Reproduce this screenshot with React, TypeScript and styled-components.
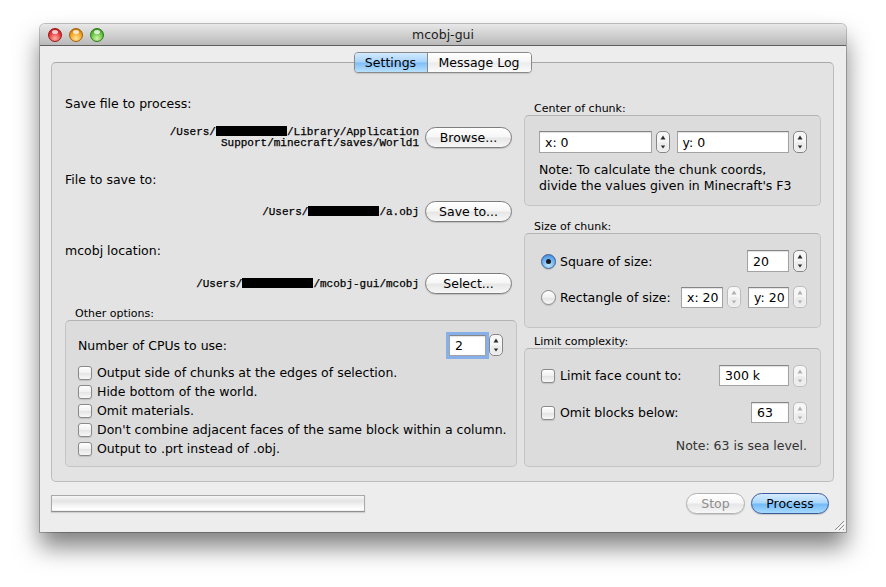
import React from 'react';
import styled, { createGlobalStyle } from 'styled-components';

//ページ全体
const GlobalStyle = createGlobalStyle`
  html, body {
    margin: 0;
    padding: 0;
    background: #ffffff;
  }
  body {
    font-family: "DejaVu Sans", "Liberation Sans", sans-serif;
    font-size: 12.5px;
    color: #000;
  }
`;

const Page = styled.div`
  width: 886px;
  height: 587px;
  box-sizing: border-box;
  padding: 24px 0 0 40px;
  overflow: hidden;
`;

//ウィンドウ
const Window = styled.div`
  position: relative;
  width: 806px;
  height: 508px;
  display: flex;
  flex-direction: column;
  background: #ededed;
  border-radius: 5px 5px 0 0;
  box-shadow: 0 0 0 1px rgba(0, 0, 0, 0.24), 0 15px 24px rgba(0, 0, 0, 0.5);
`;

const TitleBar = styled.div`
  height: 22px;
  box-sizing: border-box;
  display: flex;
  align-items: center;
  position: relative;
  padding-left: 8px;
  border-radius: 5px 5px 0 0;
  border-bottom: 1px solid #5e5e5e;
  background: linear-gradient(#e8e8e8, #d3d3d3 45%, #b9b9b9);
`;

const Lights = styled.div`
  display: flex;
  gap: 7px;
`;

const Light = styled.div<{ $color: string; $dark: string; $glow: string }>`
  position: relative;
  width: 14px;
  height: 14px;
  box-sizing: border-box;
  border-radius: 50%;
  border: 1px solid ${({ $dark }) => $dark};
  background: radial-gradient(circle at 50% 78%, ${({ $glow }) => $glow} 0%, ${({ $color }) => $color} 55%, ${({ $dark }) => $dark} 100%);
  &::after {
    content: '';
    position: absolute;
    left: 3px;
    top: 1px;
    width: 6px;
    height: 4px;
    border-radius: 50%;
    background: rgba(255, 255, 255, 0.75);
  }
`;

const Title = styled.div`
  position: absolute;
  left: 0;
  right: 0;
  text-align: center;
  font-size: 12.5px;
  color: #1c1c1c;
  pointer-events: none;
`;

const WindowBody = styled.div`
  flex: 1;
  display: flex;
  flex-direction: column;
  padding: 6px 12px 0 11px;
`;

//タブ
const TabStrip = styled.div`
  position: relative;
  z-index: 1;
  display: flex;
  justify-content: center;
  height: 21px;
  margin-bottom: -11px;
`;

const TabGroup = styled.div`
  display: flex;
  height: 21px;
  box-sizing: border-box;
  border: 1px solid #8a8a8a;
  border-radius: 4px;
  overflow: hidden;
  box-shadow: 0 1px 1px rgba(0, 0, 0, 0.12);
`;

const Tab = styled.div<{ $active?: boolean; $width: number }>`
  width: ${({ $width }) => $width}px;
  text-align: center;
  line-height: 19px;
  font-size: 12.5px;
  & + & {
    border-left: 1px solid #8a8a8a;
  }
  background: ${({ $active }) => $active
    ? 'linear-gradient(#d3eafe, #a6d3fb 48%, #7fbdf6 52%, #b9e1fd)'
    : 'linear-gradient(#ffffff, #f5f5f5 48%, #ebebeb 52%, #fbfbfb)'};
`;

const TabPanel = styled.div`
  height: 420px;
  box-sizing: border-box;
  border: 1px solid #bdbdbd;
  border-top-color: #a8a8a8;
  border-radius: 5px;
  background: #e3e3e3;
  display: grid;
  grid-template-columns: 452px 297px;
  column-gap: 7px;
  padding: 0 12px 14px 13px;
`;

const Column = styled.div<{ $top: number }>`
  display: flex;
  flex-direction: column;
  padding-top: ${({ $top }) => $top}px;
`;

const FieldLabel = styled.div<{ $gap: number }>`
  margin-top: ${({ $gap }) => $gap}px;
  line-height: 16px;
`;

const PathRow = styled.div<{ $gap: number }>`
  margin-top: ${({ $gap }) => $gap}px;
  display: flex;
  justify-content: flex-end;
  align-items: center;
  gap: 6px;
  padding-right: 5px;
`;

const PathText = styled.div`
  font-family: "Liberation Mono", "DejaVu Sans Mono", monospace;
  font-size: 11px;
  line-height: 11px;
  text-align: right;
  white-space: nowrap;
  color: #000;
  -webkit-text-stroke: 0.25px #000;
`;

const Redacted = styled.span`
  display: inline-block;
  width: 71px;
  height: 10px;
  background: #000;
  vertical-align: -1px;
`;

//ボタン
const AquaButton = styled.button<{ $width: number; $primary?: boolean }>`
  width: ${({ $width }) => $width}px;
  height: 21px;
  padding: 0;
  border-radius: 11px;
  font-family: "DejaVu Sans", "Liberation Sans", sans-serif;
  font-size: 12.5px;
  color: ${({ disabled }) => (disabled ? '#8e8e8e' : '#000')};
  border: 1px solid ${({ $primary, disabled }) => ($primary ? '#3d5a9c' : disabled ? '#b2b2b2' : '#7d7d7d')};
  background: ${({ $primary }) => $primary
    ? 'linear-gradient(#d6ecff, #a9d6fd 48%, #73b8f6 52%, #a6dbff)'
    : 'linear-gradient(#ffffff, #f6f6f6 48%, #e6e6e6 52%, #f7f7f7)'};
  box-shadow: 0 1px 1px rgba(0, 0, 0, 0.15);
  cursor: default;
`;

//グループボックス
const GroupTitle = styled.div<{ $gap: number }>`
  margin-top: ${({ $gap }) => $gap}px;
  padding-left: 10px;
  font-size: 11px;
  line-height: 13px;
`;

const GroupBox = styled.div<{ $pad: string; $grow?: boolean }>`
  box-sizing: border-box;
  border: 1px solid #c4c4c4;
  border-top-color: #b4b4b4;
  border-radius: 5px;
  background: #dcdcdc;
  padding: ${({ $pad }) => $pad};
  ${({ $grow }) => ($grow ? 'flex: 1;' : '')}
  display: flex;
  flex-direction: column;
`;

const Row = styled.div<{ $gap?: number; $height?: number }>`
  display: flex;
  align-items: center;
  height: ${({ $height }) => $height ?? 22}px;
  margin-top: ${({ $gap }) => $gap ?? 0}px;
  white-space: nowrap;
`;

const Spacer = styled.div<{ $fixed?: number }>`
  flex: ${({ $fixed }) => ($fixed ? `0 0 ${$fixed}px` : '1')};
`;

const TextField = styled.div<{ $width?: number; $height?: number; $focused?: boolean }>`
  ${({ $width }) => ($width ? `width: ${$width}px;` : 'flex: 1;')}
  height: ${({ $height }) => $height ?? 22}px;
  box-sizing: border-box;
  display: flex;
  align-items: center;
  padding: 0 5px;
  background: #fff;
  border: 1px solid #a3a3a3;
  border-top-color: #858585;
  box-shadow: inset 0 1px 1px rgba(0, 0, 0, 0.12)${({ $focused }) => ($focused ? ', 0 0 0 3px #88b0e8' : '')};
  white-space: nowrap;
`;

const StepperWrap = styled.div<{ $gap: number }>`
  margin-left: ${({ $gap }) => $gap}px;
  display: flex;
  align-items: center;
`;

const CheckBox = styled.div`
  width: 14px;
  height: 14px;
  box-sizing: border-box;
  border: 1px solid #8a8a8a;
  border-radius: 3px;
  background: linear-gradient(#ffffff, #f0f0f0 50%, #e4e4e4 51%, #f8f8f8);
  box-shadow: 0 1px 1px rgba(0, 0, 0, 0.12);
  margin-right: 5px;
  flex-shrink: 0;
`;

const Radio = styled.div<{ $on?: boolean }>`
  position: relative;
  width: 15px;
  height: 15px;
  box-sizing: border-box;
  border-radius: 50%;
  border: 1px solid ${({ $on }) => ($on ? '#3f5f95' : '#8a8a8a')};
  background: ${({ $on }) => $on
    ? 'radial-gradient(circle at 50% 80%, #bfe6ff 0%, #69b1f1 55%, #3a7fd0 100%)'
    : 'linear-gradient(#ffffff, #f0f0f0 50%, #e2e2e2 51%, #f8f8f8)'};
  box-shadow: 0 1px 1px rgba(0, 0, 0, 0.12);
  margin-right: 4px;
  flex-shrink: 0;
  &::after {
    content: '';
    display: ${({ $on }) => ($on ? 'block' : 'none')};
    position: absolute;
    left: 4px;
    top: 4px;
    width: 5px;
    height: 5px;
    border-radius: 50%;
    background: #1a1a1a;
  }
`;

const CheckList = styled.div`
  margin-top: 6px;
  display: flex;
  flex-direction: column;
`;

const CheckRow = styled.div`
  display: flex;
  align-items: center;
  height: 19px;
  white-space: nowrap;
`;

const Note = styled.div<{ $gap: number; $right?: boolean }>`
  margin-top: ${({ $gap }) => $gap}px;
  line-height: 16px;
  color: ${({ $right }) => ($right ? '#333' : '#000')};
  text-align: ${({ $right }) => ($right ? 'right' : 'left')};
  white-space: nowrap;
`;

//下部バー
const BottomBar = styled.div`
  display: flex;
  align-items: center;
  padding: 11px 5px 0 0;
`;

const ProgressBar = styled.div`
  width: 314px;
  height: 17px;
  box-sizing: border-box;
  border: 1px solid #a9a9a9;
  border-bottom-color: #8f8f8f;
  background: linear-gradient(#f6f6f6, #e4e4e4 35%, #f3f3f3 60%, #ffffff 90%, #e9e9e9);
  box-shadow: 0 1px 1px rgba(0, 0, 0, 0.12);
`;

const ButtonGroup = styled.div`
  margin-left: auto;
  display: flex;
  gap: 6px;
`;

const Grip = styled.svg`
  position: absolute;
  right: 1px;
  bottom: 1px;
`;

function Stepper(props: { disabled?: boolean }) {
  const stroke = props.disabled ? '#bcbcbc' : '#858585';
  const arrow = props.disabled ? '#b0b0b0' : '#2b2b2b';
  return (
    <svg width="14" height="22" viewBox="0 0 14 22">
      <rect x="0.5" y="0.5" width="13" height="21" rx="4.5" fill="#f6f6f6" stroke={stroke} />
      <rect x="1.5" y="11" width="11" height="9.5" rx="3.5" fill="#ececec" />
      <path d="M7 4.5 L9.5 8.5 H4.5 Z" fill={arrow} />
      <path d="M7 17.5 L9.2 14.5 H4.8 Z" fill={arrow} />
    </svg>
  );
}

const otherOptions = [
  'Output side of chunks at the edges of selection.',
  'Hide bottom of the world.',
  'Omit materials.',
  "Don't combine adjacent faces of the same block within a column.",
  'Output to .prt instead of .obj.',
];

function App() {
  return (
    <Page>
      <GlobalStyle />
      <Window>
        <TitleBar>
          <Lights>
            <Light $color="#e9383a" $dark="#9b1417" $glow="#ffb4a6" />
            <Light $color="#f3a21e" $dark="#a2600a" $glow="#ffe59a" />
            <Light $color="#61c042" $dark="#2e7a19" $glow="#d2f5a4" />
          </Lights>
          <Title>mcobj-gui</Title>
        </TitleBar>
        <WindowBody>
          <TabStrip>
            <TabGroup>
              <Tab $active $width={72}>Settings</Tab>
              <Tab $width={103}>Message Log</Tab>
            </TabGroup>
          </TabStrip>
          <TabPanel>
            {/* 左側 */}
            <Column $top={0}>
              <FieldLabel $gap={33}>Save file to process:</FieldLabel>
              <PathRow $gap={14}>
                <PathText>
                  /Users/<Redacted />/Library/Application<br />
                  Support/minecraft/saves/World1
                </PathText>
                <AquaButton $width={87}>Browse...</AquaButton>
              </PathRow>
              <FieldLabel $gap={23}>File to save to:</FieldLabel>
              <PathRow $gap={13}>
                <PathText>/Users/<Redacted />/a.obj</PathText>
                <AquaButton $width={87}>Save to...</AquaButton>
              </PathRow>
              <FieldLabel $gap={21}>mcobj location:</FieldLabel>
              <PathRow $gap={14}>
                <PathText>/Users/<Redacted />/mcobj-gui/mcobj</PathText>
                <AquaButton $width={87}>Select...</AquaButton>
              </PathRow>
              <GroupTitle $gap={13}>Other options:</GroupTitle>
              <GroupBox $grow $pad="12px 13px 0 12px">
                <Row $height={24}>
                  Number of CPUs to use:
                  <Spacer />
                  <TextField $width={37} $height={21} $focused>2</TextField>
                  <StepperWrap $gap={3}><Stepper /></StepperWrap>
                </Row>
                <CheckList>
                  {otherOptions.map((text) => (
                    <CheckRow key={text}>
                      <CheckBox />
                      {text}
                    </CheckRow>
                  ))}
                </CheckList>
              </GroupBox>
            </Column>

            {/* 右側 */}
            <Column $top={39}>
              <GroupTitle $gap={0}>Center of chunk:</GroupTitle>
              <GroupBox $pad="15px 13px 11px 14px">
                <Row>
                  <TextField>x: 0</TextField>
                  <StepperWrap $gap={4}><Stepper /></StepperWrap>
                  <Spacer $fixed={7} />
                  <TextField>y: 0</TextField>
                  <StepperWrap $gap={4}><Stepper /></StepperWrap>
                </Row>
                <Note $gap={9}>
                  Note: To calculate the chunk coords,<br />
                  divide the values given in Minecraft's F3
                </Note>
              </GroupBox>

              <GroupTitle $gap={14}>Size of chunk:</GroupTitle>
              <GroupBox $pad="16px 13px 19px 16px">
                <Row>
                  <Radio $on />
                  Square of size:
                  <Spacer />
                  <TextField $width={42}>20</TextField>
                  <StepperWrap $gap={4}><Stepper /></StepperWrap>
                </Row>
                <Row $gap={14}>
                  <Radio />
                  Rectangle of size:
                  <Spacer />
                  <TextField $width={42} $height={21}>x: 20</TextField>
                  <StepperWrap $gap={4}><Stepper disabled /></StepperWrap>
                  <Spacer $fixed={7} />
                  <TextField $width={41} $height={21}>y: 20</TextField>
                  <StepperWrap $gap={4}><Stepper disabled /></StepperWrap>
                </Row>
              </GroupBox>

              <GroupTitle $gap={7}>Limit complexity:</GroupTitle>
              <GroupBox $grow $pad="16px 13px 0 16px">
                <Row $height={21}>
                  <CheckBox />
                  Limit face count to:
                  <Spacer />
                  <TextField $width={70} $height={21}>300 k</TextField>
                  <StepperWrap $gap={4}><Stepper disabled /></StepperWrap>
                </Row>
                <Row $gap={16} $height={21}>
                  <CheckBox />
                  Omit blocks below:
                  <Spacer />
                  <TextField $width={38} $height={21}>63</TextField>
                  <StepperWrap $gap={4}><Stepper disabled /></StepperWrap>
                </Row>
                <Note $gap={15} $right>Note: 63 is sea level.</Note>
              </GroupBox>
            </Column>
          </TabPanel>

          <BottomBar>
            <ProgressBar />
            <ButtonGroup>
              <AquaButton $width={59} disabled>Stop</AquaButton>
              <AquaButton $width={78} $primary>Process</AquaButton>
            </ButtonGroup>
          </BottomBar>
        </WindowBody>
        <Grip width="12" height="12" viewBox="0 0 12 12">
          <path d="M11 2 L2 11 M11 6 L6 11 M11 10 L10 11" stroke="#8c8c8c" strokeWidth="1" />
          <path d="M12 3 L3 12 M12 7 L7 12" stroke="#ffffff" strokeWidth="1" />
        </Grip>
      </Window>
    </Page>
  );
}

export default App;
